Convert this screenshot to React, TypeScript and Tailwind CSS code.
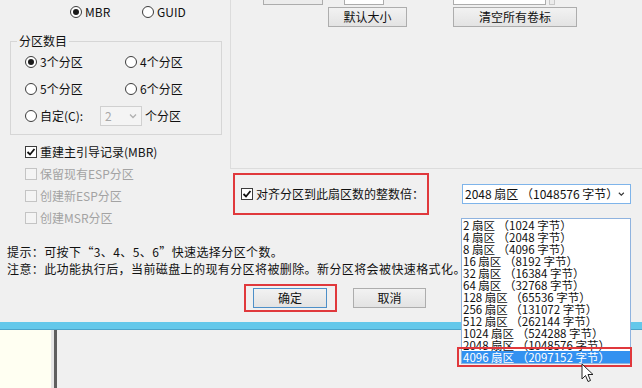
import React from 'react';

const font = "font-['Noto_Sans_CJK_SC','Noto_Sans',sans-serif]";

function Radio({ checked, label }: { checked?: boolean; label: string }) {
  return (
    <div className="flex items-center gap-[3px] h-[14px]">
      <span className="w-[12px] h-[12px] rounded-full border border-[#3c3c3c] bg-white flex items-center justify-center shrink-0">
        {checked && <span className="w-[6px] h-[6px] rounded-full bg-[#1a1a1a]" />}
      </span>
      <span className="text-[12px] leading-[14px] whitespace-nowrap">{label}</span>
    </div>
  );
}

function Check({ checked, disabled, label }: { checked?: boolean; disabled?: boolean; label: string }) {
  return (
    <div className="flex items-center gap-[3px] h-[14px]">
      <span
        className={
          disabled
            ? 'w-[12px] h-[12px] border border-[#c4c4c4] bg-[#f4f4f4] shrink-0'
            : 'w-[12px] h-[12px] border border-[#3c3c3c] bg-white flex items-center justify-center shrink-0'
        }
      >
        {checked && (
          <svg width="10" height="10" viewBox="0 0 10 10">
            <path d="M1.5 5 L4 7.5 L8.5 2" fill="none" stroke="#111" strokeWidth="1.8" />
          </svg>
        )}
      </span>
      <span className={`text-[12px] leading-[14px] whitespace-nowrap ${disabled ? 'text-[#a3a3a3]' : 'text-[#111]'}`}>
        {label}
      </span>
    </div>
  );
}

function Chevron({ color = '#333' }: { color?: string }) {
  return (
    <svg width="8" height="6" viewBox="0 0 8 6">
      <path d="M1 1.5 L4 4.5 L7 1.5" fill="none" stroke={color} strokeWidth="1.3" />
    </svg>
  );
}

function Btn({ label, primary }: { label: string; primary?: boolean }) {
  return (
    <div
      className={`h-[20px] flex items-center justify-center text-[12px] leading-[14px] text-[#111] bg-gradient-to-b from-[#f2f2f2] to-[#e3e3e3] border ${
        primary ? 'border-[#4d8fc8]' : 'border-[#adadad]'
      }`}
    >
      {label}
    </div>
  );
}

const sizes = [
  ['2', '1024'],
  ['4', '2048'],
  ['8', '4096'],
  ['16', '8192'],
  ['32', '16384'],
  ['64', '32768'],
  ['128', '65536'],
  ['256', '131072'],
  ['512', '262144'],
  ['1024', '524288'],
  ['2048', '1048576'],
  ['4096', '2097152'],
];

export default function App() {
  return (
    <div className={`relative w-[642px] h-[388px] overflow-hidden bg-[#f0f0f0] text-[#111] ${font}`}>
      {/* dialog */}
      <div className="h-[322px] flex flex-col">
        <div className="flex">
          {/* left column */}
          <div className="w-[230px] shrink-0">
            <div className="flex pl-[70px] pt-[5px]">
              <div className="w-[72px]">
                <Radio checked label="MBR" />
              </div>
              <Radio label="GUID" />
            </div>

            <div className="relative ml-[10px] mt-[22px] w-[212px] h-[94px] border border-[#d6d6d6] pl-[14px] pt-[13px]">
              <span className="absolute -top-[9px] left-[6px] px-[2px] bg-[#f0f0f0] text-[12px] leading-[16px]">分区数目</span>
              <div className="flex flex-col gap-[13px]">
                <div className="flex">
                  <div className="w-[100px]"><Radio checked label="3个分区" /></div>
                  <Radio label="4个分区" />
                </div>
                <div className="flex">
                  <div className="w-[100px]"><Radio label="5个分区" /></div>
                  <Radio label="6个分区" />
                </div>
                <div className="flex items-center">
                  <div className="w-[75px]"><Radio label="自定(C):" /></div>
                  <div className="w-[42px] h-[20px] -my-[3px] border border-[#d0d0d0] bg-[#f4f4f4] flex items-center justify-between px-[4px] text-[12px] text-[#a8a8a8]">
                    <span>2</span>
                    <Chevron color="#b0b0b0" />
                  </div>
                  <span className="ml-[3px] text-[12px] leading-[14px]">个分区</span>
                </div>
              </div>
            </div>

            <div className="flex flex-col gap-[8px] pl-[25px] mt-[10px]">
              <Check checked label="重建主引导记录(MBR)" />
              <Check disabled label="保留现有ESP分区" />
              <Check disabled label="创建新ESP分区" />
              <Check disabled label="创建MSR分区" />
            </div>
          </div>

          {/* right column */}
          <div className="flex-1">
            <div className="h-[183px] border-l border-b border-[#dcdcdc]">
              <div className="flex -mt-[14px] h-[19px]">
                <div className="ml-[32px] w-[60px] h-[19px] border border-[#acacac] bg-[#ececec]" />
                <div className="ml-[21px] w-[40px] h-[19px] border border-[#acacac] bg-white" />
                <div className="ml-[69px] w-[93px] h-[19px] border border-[#acacac] bg-white" />
                <div className="ml-[3px] w-[6px] h-[19px] border border-[#c8c8c8] bg-[#ececec]" />
              </div>
              <div className="flex mt-[2px]">
                <div className="ml-[97px] w-[79px]"><Btn label="默认大小" /></div>
                <div className="ml-[46px] w-[124px]"><Btn label="清空所有卷标" /></div>
              </div>
            </div>

            <div className="flex items-center mt-[4px]">
              <div className="ml-[3px] w-[196px] h-[42px] border-2 border-[#e0383c] flex items-center pl-[6px]">
                <Check checked label="对齐分区到此扇区数的整数倍：" />
              </div>
              <div className="ml-[33px] w-[169px] h-[20px] border border-[#7eb4ea] bg-white flex items-center justify-between pl-[2px] pr-[5px] text-[12px] leading-[14px]">
                <span className="whitespace-nowrap">2048 扇区 （1048576 字节）</span>
                <Chevron />
              </div>
            </div>
          </div>
        </div>

        <div className="mt-[18px] pl-[7px] text-[12px] leading-[17px] tracking-[0.4px]">
          <div>提示：可按下“3、4、5、6”快速选择分区个数。</div>
          <div>注意：此功能执行后，当前磁盘上的现有分区将被删除。新分区将会被快速格式化。</div>
        </div>

        <div className="flex items-center mt-[7px] ml-[244px]">
          <div className="w-[93px] h-[28px] border-2 border-[#e0383c] pl-[7px] pt-[2px]">
            <div className="w-[74px]"><Btn primary label="确定" /></div>
          </div>
          <div className="ml-[16px] w-[73px]"><Btn label="取消" /></div>
        </div>
      </div>

      {/* blue band */}
      <div className="h-[8px] bg-[#64c8ea] border-b border-[#4ca4c9]" />

      {/* lower window */}
      <div className="flex h-[58px]">
        <div className="w-[51px] bg-[#fffff2]" />
        <div className="w-[3px] bg-[#e6e6e6]" />
        <div className="w-[3px] bg-[#5f5f5f]" />
        <div className="flex-1 bg-[#f0f0f0]" />
      </div>

      {/* dropdown list */}
      <div className="absolute left-[461px] top-[218px] w-[170px] border border-[#8fb3df] bg-white text-[11.5px] leading-[12px]">
        {sizes.map(([s, b], i) => (
          <div
            key={s}
            className={`h-[12px] pl-[1px] whitespace-nowrap ${
              i === sizes.length - 1 ? 'bg-[#3391f0] text-white' : 'text-[#111]'
            }`}
          >
            {s} 扇区 （{b} 字节）
          </div>
        ))}
      </div>
      <div className="absolute left-[457px] top-[347px] w-[175px] h-[20px] border-2 border-[#e0383c]" />

      {/* mouse cursor */}
      <svg className="absolute left-[581px] top-[363px]" width="13" height="20" viewBox="0 0 13 20">
        <path d="M1 1 L1 16 L4.5 12.5 L7 18.5 L9.5 17.5 L7 11.5 L12 11.5 Z" fill="#fff" stroke="#222" strokeWidth="1" strokeLinejoin="round" />
      </svg>
    </div>
  );
}
